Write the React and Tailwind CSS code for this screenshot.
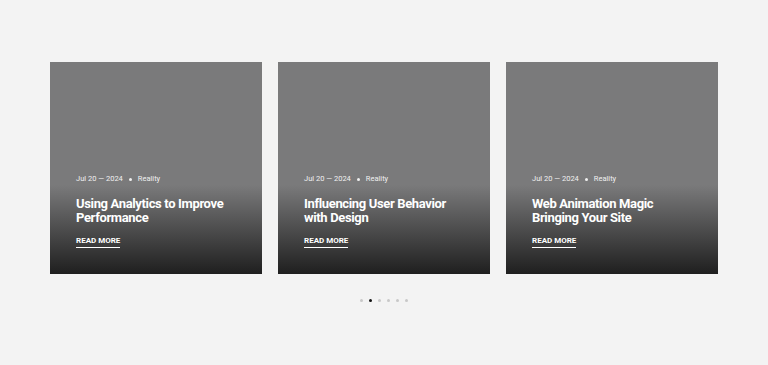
const posts = [
  { date: 'Jul 20 — 2024', tag: 'Reality', title: 'Using Analytics to Improve Performance' },
  { date: 'Jul 20 — 2024', tag: 'Reality', title: 'Influencing User Behavior with Design' },
  { date: 'Jul 20 — 2024', tag: 'Reality', title: 'Web Animation Magic Bringing Your Site' },
];

function PostCard({ post }) {
  return (
    <div className="relative h-[212px] w-[212px] bg-[#7a7a7b] overflow-hidden">
      {/* shade over the lower part */}
      <div className="absolute inset-0 bg-gradient-to-b from-transparent from-[58%] to-[#1f1f1f]" />
      <div className="relative flex h-full flex-col justify-end px-[26px] pb-[26px] text-white">
        <div className="flex items-center gap-[6px] text-[7.5px] leading-[10px] text-[#f0f0f0]">
          <span>{post.date}</span>
          <span className="h-[3px] w-[3px] rounded-full bg-[#f0f0f0]" />
          <span>{post.tag}</span>
        </div>
        <h3 className="mt-[13px] text-[13px] font-bold leading-[14px] tracking-[-0.35px]">
          {post.title}
        </h3>
        <a className="mt-[11px] self-start border-b border-white pb-[1px] text-[8px] font-bold leading-[10px]">
          READ MORE
        </a>
      </div>
    </div>
  );
}

export default function App() {
  return (
    <div className="h-[365px] w-full bg-[#f3f3f3] pt-[62px] font-['Roboto',sans-serif]">
      <div className="flex justify-center gap-[16px]">
        {posts.map((p, i) => (
          <PostCard key={i} post={p} />
        ))}
      </div>
      <div className="mt-[25px] flex justify-center gap-[6px]">
        {[0, 1, 2, 3, 4, 5].map((i) => (
          <span
            key={i}
            className={i === 1 ? 'h-[3px] w-[3px] rounded-full bg-[#111]' : 'h-[3px] w-[3px] rounded-full bg-[#c8c8c8]'}
          />
        ))}
      </div>
    </div>
  );
}
